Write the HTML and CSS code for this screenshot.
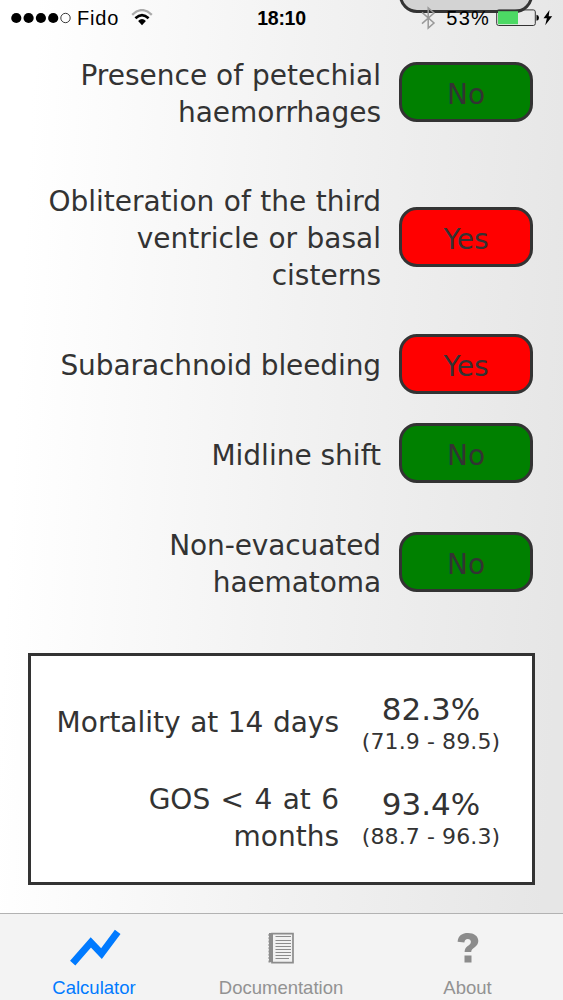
FILE: index.html
```html
<!DOCTYPE html>
<html lang="en">
<head>
<meta charset="utf-8">
<title>Calculator</title>
<link rel="stylesheet" href="styles.css">
</head>
<body>
<div class="screen">
  <header class="status">
    <div class="clipped-button"></div>
    <div class="carrier">
      <svg class="signal" width="60" height="12" viewBox="0 0 60 12"><g fill="#000"><circle cx="5.3" cy="6" r="5.1"/><circle cx="17.6" cy="6" r="5.1"/><circle cx="29.9" cy="6" r="5.1"/><circle cx="42.2" cy="6" r="5.1"/></g><circle cx="54.5" cy="6" r="4.7" fill="none" stroke="#222" stroke-width=".9"/></svg>
      <span class="carrier-name">Fido</span>
      <svg class="wifi" width="22" height="18" viewBox="0 0 22 18" fill="none"><path d="M1.2 5.8Q11-3.6 20.8 5.8" stroke="#aaa" stroke-width="2.3"/><path d="M4.4 9.2Q11 2.9 17.6 9.2" stroke="#000" stroke-width="2.6"/><path d="M7.1 12.1Q11 8.1 14.9 12.1L11 16.3Z" fill="#000"/></svg>
    </div>
    <div class="time">18:10</div>
    <div class="power">
      <svg class="bluetooth" width="15" height="24" viewBox="0 0 15 24" fill="none" stroke="#999" stroke-width="1.5"><path d="M1 6.4 13 17 7.2 22V2L13 7 1 17.6"/></svg>
      <span class="percent">53%</span>
      <svg class="battery" width="58" height="18" viewBox="0 0 58 18"><rect x=".7" y=".9" width="38.6" height="15.6" rx="2" fill="none" stroke="#333" stroke-width="1"/><rect x="2" y="2.2" width="20" height="13" fill="#4cd964"/><path d="M40.5 5.7Q43 6 43 8.7t-2.5 3Z" fill="#000"/><path d="M53.5 1 47.5 9.3h3.4l-1.7 7 7-9.1h-3.5Z" fill="#000"/></svg>
    </div>
  </header>
  <main>
    <section class="questions">
      <label class="question">Presence of petechial<br>haemorrhages</label><button class="answer no">No</button>
      <label class="question wide">Obliteration of the third<br>ventricle or basal<br>cisterns</label><button class="answer yes">Yes</button>
      <label class="question narrow">Subarachnoid bleeding</label><button class="answer yes">Yes</button>
      <label class="question">Midline shift</label><button class="answer no">No</button>
      <label class="question narrow">Non-evacuated<br>haematoma</label><button class="answer no">No</button>
    </section>
    <section class="results">
      <div class="outcome wide">Mortality at 14 days</div>
      <div class="risk"><div class="value">82.3%</div><div class="range">(71.9 - 89.5)</div></div>
      <div class="outcome"><span class="gos">GOS &lt; 4 at 6</span><br>months</div>
      <div class="risk"><div class="value">93.4%</div><div class="range">(88.7 - 96.3)</div></div>
    </section>
  </main>
  <nav class="tabs">
    <a class="tab active"><svg width="54" height="40" viewBox="0 0 54 40"><path d="M5.2 35.7 23.3 15 34 26.2 50.2 4.4" transform="translate(.5 -.6)" fill="none" stroke="#007aff" stroke-width="7"/></svg><span>Calculator</span></a>
    <a class="tab"><svg width="30" height="40" viewBox="0 0 30 40" fill="none" stroke="#8c8c8c"><path d="M6 5.7h21v29H6Z" fill="#f1f1f1" stroke-width="1.7"/><path d="M5 5v29" stroke-width="4"/><path d="M3.5 6v29" stroke-width="2" stroke-dasharray="2 1.3"/><path d="M9.5 8.5h15.5M9.5 12.5h15.5M9.5 15.5h15.5M9.5 18.5h15.5M9.5 21.5h15.5M9.5 24.5h15.5M9.5 27.5h15.5M9.5 30.5h13.5" stroke-width="1.2"/></svg><span>Documentation</span></a>
    <a class="tab"><svg width="24" height="40" viewBox="0 0 24 40"><path d="M1.6 13.8C2 7.6 6.3 5 12 5c6 0 10.3 3.1 10.3 8.1 0 6.4-7.1 6.4-7.1 10.9H8.6c0-6.2 6.3-6 6.3-10.2 0-1.9-1.3-2.9-3.1-2.9-2.1 0-3.3 1.2-3.4 3.5ZM8.5 27.4h7v7.2h-7Z" fill="#8c8c8c"/></svg><span>About</span></a>
  </nav>
</div>
</body>
</html>
```
FILE: styles.css
```css
* { box-sizing: border-box; }
body { margin: 0; }
.screen {
  width: 563px;
  height: 1000px;
  display: flex;
  flex-direction: column;
  overflow: hidden;
  background: linear-gradient(93deg, #fff 6%, #f2f2f2 51%, #e6e6e6 96%);
  color: #333;
  font-family: Verdana, "DejaVu Sans", sans-serif;
}
.status {
  position: relative;
  height: 38px;
  display: grid;
  grid-template-columns: 1fr 60px 1fr;
  align-items: center;
  padding: 0 11px 2px 11px;
  color: #000;
  font: 20px/24px "Liberation Sans", Arial, sans-serif;
}
.clipped-button {
  position: absolute;
  left: 399px;
  top: -47px;
  width: 134px;
  height: 60px;
  border: 3.5px solid #333;
  border-radius: 18px;
  background: #d3d3d3;
}
.carrier, .power { display: flex; align-items: center; position: relative; }
.carrier-name { margin: 0 12px 0 6px; letter-spacing: .8px; }
.time { font-weight: bold; text-align: center; font-size: 19.5px; letter-spacing: -.3px; }
.power { justify-content: flex-end; }
.bluetooth { margin-right: 10px; }
.percent { margin-right: 6px; letter-spacing: 1.2px; }
.battery { margin-right: -2px; }
.questions {
  display: grid;
  grid-template-columns: 381px 134px;
  column-gap: 18px;
  grid-template-rows: 108px 181px 73px 106px 112px;
  align-items: center;
}
.question, .outcome {
  font-size: 28px;
  line-height: 37px;
  text-align: right;
  white-space: nowrap;
}
.question { padding-top: 4px; }
.wide { word-spacing: .6px; }
.narrow { letter-spacing: -.1px; }
.gos { word-spacing: 1.5px; }
.answer {
  height: 60px;
  padding: 5px 0 0;
  border: 3.5px solid #333;
  border-radius: 18px;
  color: #333;
  font: 28px/37px Verdana, "DejaVu Sans", sans-serif;
}
.no { background: #008000; }
.yes { background: #f00; }
.results {
  width: 507px;
  height: 232px;
  margin: 35px 0 0 28px;
  padding: 19px 0 0;
  border: 3.5px solid #333;
  background: #fff;
  display: grid;
  grid-template-columns: 308px 140px;
  grid-template-rows: 95px 95px;
  column-gap: 22px;
  align-items: center;
}
.risk { text-align: center; white-space: nowrap; }
.value { font-size: 31px; line-height: 38px; }
.range { font-size: 22px; line-height: 28px; letter-spacing: .1px; }
.tabs {
  height: 87px;
  margin-top: auto;
  display: grid;
  grid-template-columns: 188px 186px 187px;
  border-top: 1px solid #b2b2b2;
  background: #f3f3f3;
}
.tab {
  display: flex;
  flex-direction: column;
  align-items: center;
  padding-top: 14px;
  color: #929292;
  font: 18.5px/24px "Liberation Sans", Arial, sans-serif;
}
.tab span { margin-top: 8px; }
.active { color: #007aff; }
```
